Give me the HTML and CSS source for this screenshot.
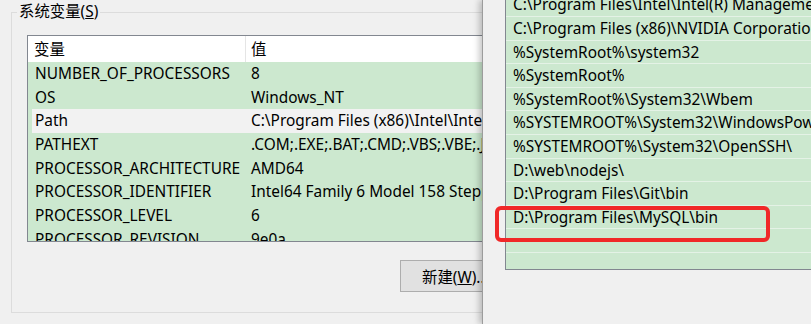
FILE: index.html
```html
<!DOCTYPE html>
<html lang="zh-CN">
<head>
    <meta charset="UTF-8">
    <title>环境变量</title>
    <link rel="stylesheet" href="styles.css">
</head>
<body>
    <div class="desktop">
        <div class="win win-main">
            <fieldset class="group">
                <legend>系统变量(<u>S</u>)</legend>
                <div class="listview">
                    <div class="lv-head">
                        <div class="col-name">变量</div>
                        <div class="col-val">值</div>
                    </div>
                    <div class="lv-body">
                        <div class="lv-row"><span class="col-name">NUMBER_OF_PROCESSORS</span><span class="col-val">8</span></div>
                        <div class="lv-row"><span class="col-name">OS</span><span class="col-val">Windows_NT</span></div>
                        <div class="lv-row selected"><span class="col-name">Path</span><span class="col-val">C:\Program Files (x86)\Intel\Intel(R) Management Engine Components\iCLS\;C:\Program Files\Intel</span></div>
                        <div class="lv-row"><span class="col-name">PATHEXT</span><span class="col-val">.COM;.EXE;.BAT;.CMD;.VBS;.VBE;.JS;.JSE;.WSF;.WSH;.MSC</span></div>
                        <div class="lv-row"><span class="col-name">PROCESSOR_ARCHITECTURE</span><span class="col-val">AMD64</span></div>
                        <div class="lv-row"><span class="col-name">PROCESSOR_IDENTIFIER</span><span class="col-val">Intel64 Family 6 Model 158 Stepping 10, GenuineIntel</span></div>
                        <div class="lv-row"><span class="col-name">PROCESSOR_LEVEL</span><span class="col-val">6</span></div>
                        <div class="lv-row"><span class="col-name">PROCESSOR_REVISION</span><span class="col-val">9e0a</span></div>
                    </div>
                </div>
                <div class="buttons">
                    <button class="btn">新建(<u>W</u>)...</button>
                </div>
            </fieldset>
        </div>

        <div class="win win-edit">
            <div class="pathlist">
                <div class="pl-row">C:\Program Files\Intel\Intel(R) Management Engine Components\DAL</div>
                <div class="pl-row">C:\Program Files (x86)\NVIDIA Corporation\PhysX\Common</div>
                <div class="pl-row">%SystemRoot%\system32</div>
                <div class="pl-row">%SystemRoot%</div>
                <div class="pl-row">%SystemRoot%\System32\Wbem</div>
                <div class="pl-row">%SYSTEMROOT%\System32\WindowsPowerShell\v1.0\</div>
                <div class="pl-row">%SYSTEMROOT%\System32\OpenSSH\</div>
                <div class="pl-row">D:\web\nodejs\</div>
                <div class="pl-row">D:\Program Files\Git\bin</div>
                <div class="pl-row">D:\Program Files\MySQL\bin</div>
                <div class="pl-row"></div>
                <div class="pl-row"></div>
            </div>
            <!-- red marker drawn on the screenshot -->
            <div class="mark"></div>
        </div>
    </div>
</body>
</html>
```

FILE: styles.css
```css
body {
    margin: 0;
    background-color: #f0f0f0;
    font-family: "Noto Sans", "Noto Sans CJK SC", sans-serif;
    font-size: 15.4px;
    color: #000;
}
.desktop {
    position: relative;
    width: 811px;
    height: 324px;
    overflow: hidden;
}
.win {
    background-color: #f0f0f0;
}
.win-main {
    width: 811px;
    height: 324px;
    padding-top: 1px;
    box-sizing: border-box;
}
.group {
    width: 700px;
    margin: 0 0 0 11px;
    padding: 0;
    border: 1px solid #dcdcdc;
    min-inline-size: 0;
}
.group legend {
    margin-left: 5px;
    padding: 0 2px;
    line-height: 22px;
    height: 22px;
}
.listview {
    width: 640px;
    height: 205px;
    margin: 12px 0 0 15px;
    border: 1px solid #828790;
    background-color: #cce8cf;
    overflow: hidden;
}
.lv-head {
    display: flex;
    height: 26px;
    line-height: 27px;
    background: #fff;
}
.lv-head .col-name {
    width: 211px;
    padding-left: 6px;
    border-right: 1px solid #e5e5e5;
}
.lv-head .col-val {
    padding-left: 5px;
}
.lv-row {
    display: flex;
    height: 23.7px;
    box-sizing: border-box;
    padding-top: 1px;
    line-height: 22.7px;
    margin-left: 4px;
    white-space: nowrap;
}
.lv-row .col-name {
    width: 216px;
    padding-left: 3px;
    flex: none;
}
.lv-row.selected {
    background-color: #f2f2f2;
}
.buttons {
    margin: 18px 0 20px 388px;
}
.btn {
    width: 113px;
    height: 32px;
    padding: 0 0 0 21px;
    text-align: left;
    font: inherit;
    background: #e1e1e1;
    border: 1px solid #adadad;
    border-radius: 0;
    color: #000;
}
.win-edit {
    position: absolute;
    left: 482px;
    top: 0;
    right: 0;
    bottom: 0;
    border-left: 1px solid #9c9c9c;
    box-shadow: -3px 0 6px rgba(0, 0, 0, 0.22);
}
.pathlist {
    height: 275.6px;
    margin: -7.6px 0 0 22px;
    border: 1px solid #828790;
    border-right: none;
    background-color: #cce8cf;
    overflow: hidden;
}
.pl-row {
    height: 23.6px;
    padding-top: 2px;
    line-height: 20.6px;
    box-sizing: border-box;
    padding-left: 7px;
    border-bottom: 1px solid #e4f2e6;
    white-space: nowrap;
}
.mark {
    position: absolute;
    left: 12px;
    top: 206px;
    width: 275px;
    height: 36px;
    box-sizing: border-box;
    border: 4px solid #f02828;
    border-radius: 6px;
}
```
